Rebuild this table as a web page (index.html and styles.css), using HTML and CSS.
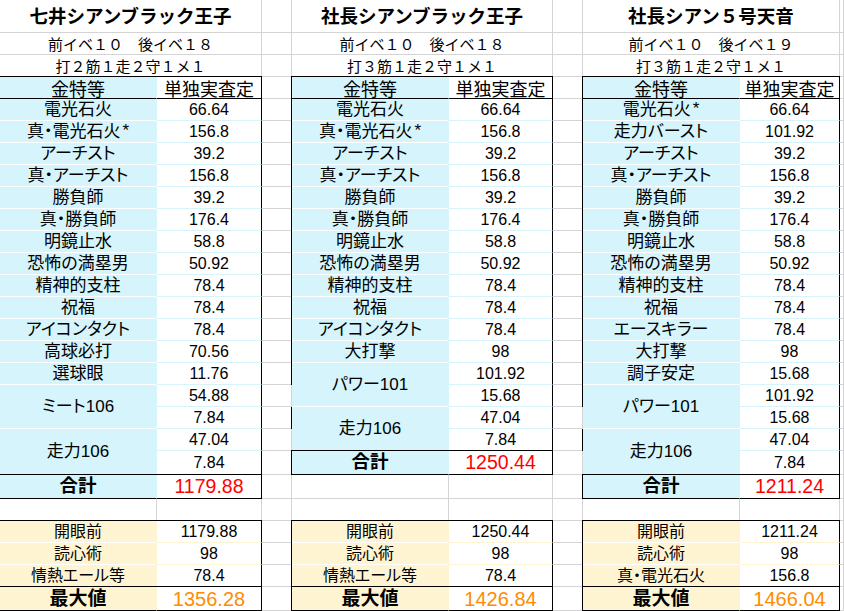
FILE: index.html
```html
<!DOCTYPE html>
<html lang="ja">
<head>
<meta charset="utf-8">
<title>査定比較</title>
<link rel="stylesheet" href="styles.css">
</head>
<body>
<div class="sheet">
  <!-- row 1 -->
  <div class="c t">七井シアンブラック王子</div><div class="c"></div>
  <div class="c t">社長シアンブラック王子</div><div class="c"></div>
  <div class="c t">社長シアン５号天音</div><div class="c"></div>
  <!-- row 2 -->
  <div class="c s">前イベ１０　後イベ１８</div><div class="c"></div>
  <div class="c s">前イベ１０　後イベ１８</div><div class="c"></div>
  <div class="c s">前イベ１０　後イベ１９</div><div class="c"></div>
  <!-- row 3 -->
  <div class="c s">打２筋１走２守１メ１</div><div class="c"></div>
  <div class="c s">打３筋１走２守１メ１</div><div class="c"></div>
  <div class="c s">打３筋１走２守１メ１</div><div class="c"></div>
  <!-- row 4 header -->
  <div class="c k head"><span class="u">金特等</span></div><div class="c v head"><span class="u">単独実査定</span></div><div class="c"></div>
  <div class="c k head"><span class="u">金特等</span></div><div class="c v head"><span class="u">単独実査定</span></div><div class="c"></div>
  <div class="c k head"><span class="u">金特等</span></div><div class="c v head"><span class="u">単独実査定</span></div><div class="c"></div>
  <!-- row 5 -->
  <div class="c k">電光石火</div><div class="c v">66.64</div><div class="c"></div>
  <div class="c k">電光石火</div><div class="c v">66.64</div><div class="c"></div>
  <div class="c k">電光石火<span class="ast">*</span></div><div class="c v">66.64</div><div class="c"></div>
  <!-- row 6 -->
  <div class="c k">真・電光石火<span class="ast">*</span></div><div class="c v">156.8</div><div class="c"></div>
  <div class="c k">真・電光石火<span class="ast">*</span></div><div class="c v">156.8</div><div class="c"></div>
  <div class="c k">走力バースト</div><div class="c v">101.92</div><div class="c"></div>
  <!-- row 7 -->
  <div class="c k">アーチスト</div><div class="c v">39.2</div><div class="c"></div>
  <div class="c k">アーチスト</div><div class="c v">39.2</div><div class="c"></div>
  <div class="c k">アーチスト</div><div class="c v">39.2</div><div class="c"></div>
  <!-- row 8 -->
  <div class="c k">真・アーチスト</div><div class="c v">156.8</div><div class="c"></div>
  <div class="c k">真・アーチスト</div><div class="c v">156.8</div><div class="c"></div>
  <div class="c k">真・アーチスト</div><div class="c v">156.8</div><div class="c"></div>
  <!-- row 9 -->
  <div class="c k">勝負師</div><div class="c v">39.2</div><div class="c"></div>
  <div class="c k">勝負師</div><div class="c v">39.2</div><div class="c"></div>
  <div class="c k">勝負師</div><div class="c v">39.2</div><div class="c"></div>
  <!-- row 10 -->
  <div class="c k">真・勝負師</div><div class="c v">176.4</div><div class="c"></div>
  <div class="c k">真・勝負師</div><div class="c v">176.4</div><div class="c"></div>
  <div class="c k">真・勝負師</div><div class="c v">176.4</div><div class="c"></div>
  <!-- row 11 -->
  <div class="c k">明鏡止水</div><div class="c v">58.8</div><div class="c"></div>
  <div class="c k">明鏡止水</div><div class="c v">58.8</div><div class="c"></div>
  <div class="c k">明鏡止水</div><div class="c v">58.8</div><div class="c"></div>
  <!-- row 12 -->
  <div class="c k">恐怖の満塁男</div><div class="c v">50.92</div><div class="c"></div>
  <div class="c k">恐怖の満塁男</div><div class="c v">50.92</div><div class="c"></div>
  <div class="c k">恐怖の満塁男</div><div class="c v">50.92</div><div class="c"></div>
  <!-- row 13 -->
  <div class="c k">精神的支柱</div><div class="c v">78.4</div><div class="c"></div>
  <div class="c k">精神的支柱</div><div class="c v">78.4</div><div class="c"></div>
  <div class="c k">精神的支柱</div><div class="c v">78.4</div><div class="c"></div>
  <!-- row 14 -->
  <div class="c k">祝福</div><div class="c v">78.4</div><div class="c"></div>
  <div class="c k">祝福</div><div class="c v">78.4</div><div class="c"></div>
  <div class="c k">祝福</div><div class="c v">78.4</div><div class="c"></div>
  <!-- row 15 -->
  <div class="c k">アイコンタクト</div><div class="c v">78.4</div><div class="c"></div>
  <div class="c k">アイコンタクト</div><div class="c v">78.4</div><div class="c"></div>
  <div class="c k">エースキラー</div><div class="c v">78.4</div><div class="c"></div>
  <!-- row 16 -->
  <div class="c k">高球必打</div><div class="c v">70.56</div><div class="c"></div>
  <div class="c k">大打撃</div><div class="c v">98</div><div class="c"></div>
  <div class="c k">大打撃</div><div class="c v">98</div><div class="c"></div>
  <!-- row 17 -->
  <div class="c k">選球眼</div><div class="c v">11.76</div><div class="c"></div>
  <div class="c k r2">パワー101</div><div class="c v">101.92</div><div class="c"></div>
  <div class="c k">調子安定</div><div class="c v">15.68</div><div class="c"></div>
  <!-- row 18 -->
  <div class="c k r2">ミート106</div><div class="c v">54.88</div><div class="c"></div>
  <div class="c v">15.68</div><div class="c"></div>
  <div class="c k r2">パワー101</div><div class="c v">101.92</div><div class="c"></div>
  <!-- row 19 -->
  <div class="c v">7.84</div><div class="c"></div>
  <div class="c k r2">走力106</div><div class="c v">47.04</div><div class="c"></div>
  <div class="c v">15.68</div><div class="c"></div>
  <!-- row 20 -->
  <div class="c k r2">走力106</div><div class="c v">47.04</div><div class="c"></div>
  <div class="c v">7.84</div><div class="c"></div>
  <div class="c k r2">走力106</div><div class="c v">47.04</div><div class="c"></div>
  <!-- row 21 -->
  <div class="c v">7.84</div><div class="c"></div>
  <div class="c k sum">合計</div><div class="c v sum">1250.44</div><div class="c"></div>
  <div class="c v">7.84</div><div class="c"></div>
  <!-- row 22 -->
  <div class="c k sum">合計</div><div class="c v sum">1179.88</div><div class="c"></div>
  <div class="c"></div><div class="c"></div><div class="c"></div>
  <div class="c k sum">合計</div><div class="c v sum">1211.24</div><div class="c"></div>
  <!-- row 23 blank -->
  <div class="c"></div><div class="c"></div><div class="c"></div>
  <div class="c"></div><div class="c"></div><div class="c"></div>
  <div class="c"></div><div class="c"></div><div class="c"></div>
  <!-- row 24 -->
  <div class="c y first">開眼前</div><div class="c w first">1179.88</div><div class="c"></div>
  <div class="c y first">開眼前</div><div class="c w first">1250.44</div><div class="c"></div>
  <div class="c y first">開眼前</div><div class="c w first">1211.24</div><div class="c"></div>
  <!-- row 25 -->
  <div class="c y">読心術</div><div class="c w">98</div><div class="c"></div>
  <div class="c y">読心術</div><div class="c w">98</div><div class="c"></div>
  <div class="c y">読心術</div><div class="c w">98</div><div class="c"></div>
  <!-- row 26 -->
  <div class="c y">情熱エール等</div><div class="c w">78.4</div><div class="c"></div>
  <div class="c y">情熱エール等</div><div class="c w">78.4</div><div class="c"></div>
  <div class="c y">真・電光石火</div><div class="c w">156.8</div><div class="c"></div>
  <!-- row 27 -->
  <div class="c y max">最大値</div><div class="c w max">1356.28</div><div class="c"></div>
  <div class="c y max">最大値</div><div class="c w max">1426.84</div><div class="c"></div>
  <div class="c y max">最大値</div><div class="c w max">1466.04</div><div class="c"></div>
</div>
</body>
</html>
```
FILE: styles.css
```css
html, body {
  margin: 0;
  padding: 0;
  background: #fff;
  overflow: hidden;
}

.sheet {
  display: grid;
  grid-template-columns: 157px 105px 30px 157px 104px 30px 157px 100px 4px;
  grid-template-rows: 33px 22px 22px 22px repeat(16, 22px) 24px 24px 22px 22px 22px 22px 24px;
  width: 844px;
  height: 611px;
  font-family: "Liberation Sans", "Noto Sans CJK JP", sans-serif;
  color: #000;
}

.c {
  box-sizing: border-box;
  border-right: 1px solid #d4d4d4;
  border-bottom: 1px solid #d4d4d4;
  display: flex;
  align-items: center;
  justify-content: center;
  white-space: nowrap;
  line-height: 1;
  background: #fff;
}

/* title & subtitles (merged across two columns) */
.t {
  grid-column: span 2;
  font-family: "Noto Sans CJK JP", sans-serif;
  font-weight: bold;
  font-size: 18.5px;
  padding-bottom: 1px;
}
.s {
  grid-column: span 2;
  font-family: "Noto Sans CJK JP", sans-serif;
  font-size: 15px;
}

/* upper table */
.k {
  background: #d5f4fb;
  border-right-color: #d5f4fb;
  border-bottom-color: #fff;
  box-shadow: -1px 0 0 #000;
  font-size: 17px;
  font-feature-settings: "palt";
}
.ast {
  font-family: "Liberation Sans", sans-serif;
  font-size: 17px;
  margin-left: 2px;
  margin-bottom: 2px;
}
.v {
  border-right-color: #000;
  border-bottom-color: #d5f4fb;
  font-size: 16px;
}
.r2 {
  grid-row: span 2;
}

.head {
  font-size: 18px;
  border-bottom-color: #000;
  font-feature-settings: normal;
  font-family: "Noto Sans CJK JP", sans-serif;
}
.u {
  text-decoration: underline;
  text-underline-offset: 3px;
  text-decoration-thickness: 1px;
}
.k.head, .k.sum, .y.first, .y.max {
  box-shadow: -1px 0 0 #000, 0 -1px 0 #000, -1px -1px 0 #000;
}
.v.head, .v.sum, .w.first, .w.max {
  box-shadow: 0 -1px 0 #000;
}

.sum {
  border-bottom-color: #000;
}
.k.sum {
  font-weight: bold;
  font-size: 18.5px;
}
.v.sum {
  color: #ff0000;
  font-size: 19.5px;
}

/* lower table */
.y {
  background: #fff4d2;
  border-right-color: #fff4d2;
  border-bottom-color: #fff;
  box-shadow: -1px 0 0 #000;
  font-size: 16px;
  font-feature-settings: "palt";
}
.w {
  border-right-color: #000;
  border-bottom-color: #fff4d2;
  font-size: 16px;
}
.max {
  border-bottom-color: #000;
}
.y.max {
  font-weight: bold;
  font-size: 19px;
}
.w.max {
  color: #ff8c00;
  font-size: 20px;
}
```
